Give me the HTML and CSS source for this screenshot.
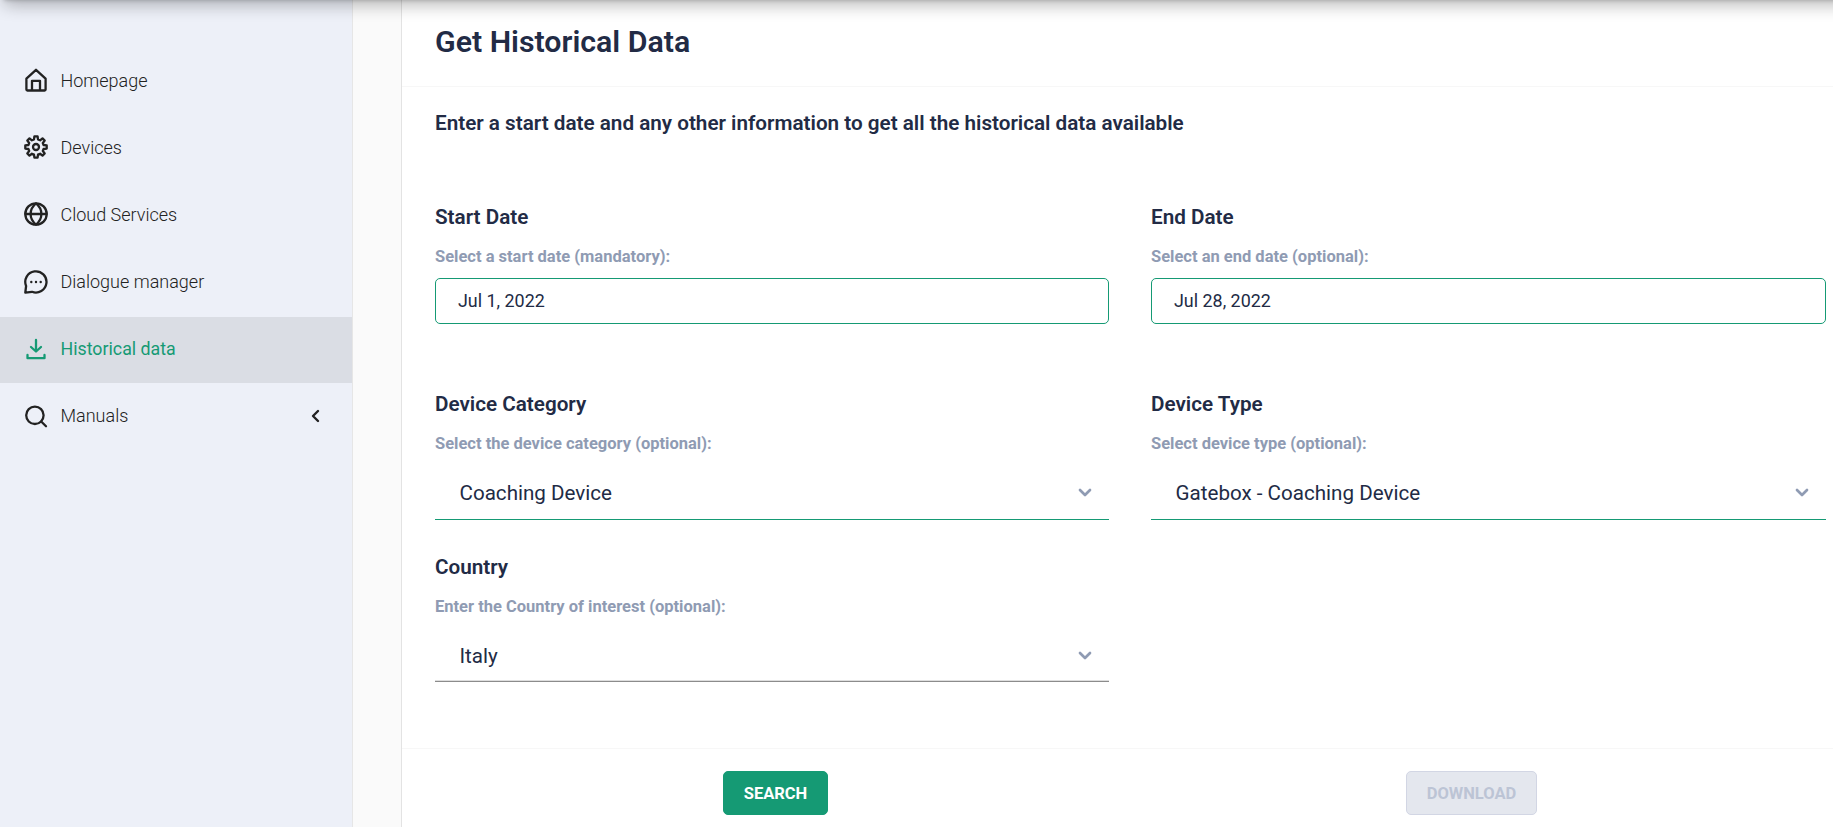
FILE: index.html
```html
<!DOCTYPE html>
<html lang="en">
<head>
<meta charset="utf-8">
<title>Get Historical Data</title>
<link rel="stylesheet" href="styles.css">
</head>
<body>
<div class="layout">
  <nav class="sidebar">
    <a class="item"><svg class="icon" viewBox="0 0 24 24"><path d="M12 1.800 2.400 10.600v10.900a1 1 0 0 0 1 1h17.200a1 1 0 0 0 1-1V10.600ZM8 22v-9.200h8V22"/></svg><span>Homepage</span></a>
    <a class="item"><svg class="icon" viewBox="0 0 24 24"><circle cx="12" cy="12" r="3"/><path d="M10 4.400 10.400 1.300h3.200l.4 3.100 2.100.9 2.400-1.900 2.200 2.200-1.900 2.400.8 2 3.100.4v3.200l-3.100.4-.8 2 1.900 2.400-2.200 2.200-2.400-1.900-2.100.9-.4 3.100h-3.200l-.4-3.100-2.100-.9-2.400 1.900-2.200-2.200 1.900-2.400-.8-2-3.100-.4v-3.200l3.100-.4.8-2-1.900-2.400 2.200-2.200 2.400 1.900Z"/></svg><span>Devices</span></a>
    <a class="item"><svg class="icon" viewBox="0 0 24 24"><circle cx="12" cy="12" r="10.700"/><path d="M1.500 12h21M12 1.400c-7.200 6-7.200 15.200 0 21.200 7.200-6 7.200-15.200 0-21.200Z"/></svg><span>Cloud Services</span></a>
    <a class="item"><svg class="icon" viewBox="0 0 24 24"><path d="M1.300 22.600 2.100 16A10.600 10.600 0 1 1 8 21.800Z"/><path class="dots" d="M7.300 12h.01M12 12h.01M16.700 12h.01"/></svg><span>Dialogue manager</span></a>
    <a class="item active"><svg class="icon" viewBox="0 0 24 24"><path d="M12 3v11M7 10l5 4.500L17 10M3.500 18v3.200h17V18"/></svg><span>Historical data</span></a>
    <a class="item"><svg class="icon" viewBox="0 0 24 24"><circle cx="10.900" cy="11.300" r="8.700"/><path d="m17.200 17.500 4.800 4.800"/></svg><span>Manuals</span><svg class="expand" viewBox="0 0 12 14"><path d="M8 2 3 7l5 5"/></svg></a>
  </nav>
  <main class="card">
    <header class="card-header"><h1>Get Historical Data</h1></header>
    <section class="card-body">
      <h2 class="intro">Enter a start date and any other information to get all the historical data available</h2>
      <div class="grid">
        <div class="field date"><h3>Start Date</h3><label>Select a start date (mandatory):</label><div class="input">Jul 1, 2022</div></div>
        <div class="field date"><h3>End Date</h3><label>Select an end date (optional):</label><div class="input">Jul 28, 2022</div></div>
        <div class="field"><h3>Device Category</h3><label>Select the device category (optional):</label><div class="select"><span>Coaching Device</span><svg class="chev" viewBox="0 0 14 10"><path d="m2 2 5 5 5-5"/></svg></div></div>
        <div class="field"><h3>Device Type</h3><label>Select device type (optional):</label><div class="select"><span>Gatebox - Coaching Device</span><svg class="chev" viewBox="0 0 14 10"><path d="m2 2 5 5 5-5"/></svg></div></div>
        <div class="field"><h3>Country</h3><label>Enter the Country of interest (optional):</label><div class="select idle"><span>Italy</span><svg class="chev" viewBox="0 0 14 10"><path d="m2 2 5 5 5-5"/></svg></div></div>
      </div>
    </section>
    <footer class="card-footer"><button class="btn search">SEARCH</button><button class="btn download" disabled>DOWNLOAD</button></footer>
  </main>
</div>
<div class="top-shadow"></div>
</body>
</html>
```
FILE: styles.css
```css
* { box-sizing: border-box; }
body { margin: 0; height: 827px; overflow: hidden; background: #fafafa; font-family: Roboto, "Liberation Sans", sans-serif; color: #222b45; }
h1, h2, h3 { margin: 0; font-weight: 600; }
.layout { display: flex; height: 827px; }
.sidebar { width: 353px; flex: none; padding-top: 48px; background: #edf0f8; border-right: 1px solid #e6e6e6; display: flex; flex-direction: column; gap: 1.2px; }
.item { height: 66px; flex: none; display: flex; align-items: center; padding: 0 30px 2px 24px; font-size: 18px; font-weight: 300; color: #222; }
.item span { margin-left: 12.5px; flex: 1; }
.icon { width: 24px; height: 24px; }
svg { fill: none; stroke: currentColor; stroke-width: 2.3; stroke-linejoin: round; stroke-linecap: round; }
.dots { stroke-width: 2.4; }
.active { background: #dadde4; color: #159a74; font-weight: 400; font-size: 17.8px; }
.expand { width: 12px; height: 14px; stroke-width: 2.4; }
.card { margin-left: 48px; flex: 1; background: #fff; border-left: 1px solid #e3e3e3; }
.card-header { height: 87px; padding: 24px 33px 0; border-bottom: 1px solid #f7f7f7; }
h1 { font-size: 30.3px; line-height: 36px; }
.card-body { height: 661px; padding: 24px 7px 0 33px; }
h2, h3 { font-size: 20.68px; line-height: 24px; white-space: nowrap; }
.grid { display: grid; grid-template-columns: 674px 675px; column-gap: 42px; margin-top: 70px; }
.field { height: 163px; }
.date { height: 187px; }
label { display: block; margin-top: 18px; font-size: 16.5px; line-height: 20px; font-weight: 700; color: #8f9bb3; }
.input { height: 46px; margin-top: 11px; border: 1px solid #159a74; border-radius: 5px; padding-left: 22px; font-size: 17.9px; line-height: 44px; }
.select { height: 49px; margin-top: 17px; border-bottom: 1px solid #159a74; padding: 0 17px 4px 24.5px; display: flex; align-items: center; justify-content: space-between; font-size: 20.6px; }
.idle { height: 48px; border-color: #8c8c8c; box-shadow: inset 0 -1px #dedede; }
.chev { width: 14px; height: 10px; color: #8f9bb3; stroke-width: 2.7; }
.card-footer { border-top: 1px solid #f7f7f7; padding: 22px 0 0 321px; display: flex; gap: 578px; }
.btn { height: 44px; border: 1px solid #159a74; border-radius: 5px; padding: 0; background: #159a74; color: #fff; font: 700 16.5px Roboto, sans-serif; }
.search { width: 105px; }
.download { width: 131px; background: #e4e7ee; border-color: #d2d6e4; color: #bcc4d5; }
.top-shadow { position: absolute; top: -10px; left: 4px; right: -30px; height: 10px; box-shadow: 0 2px 18px rgba(0,0,0,.45), 0 0 4px rgba(0,0,0,.25); }
```
